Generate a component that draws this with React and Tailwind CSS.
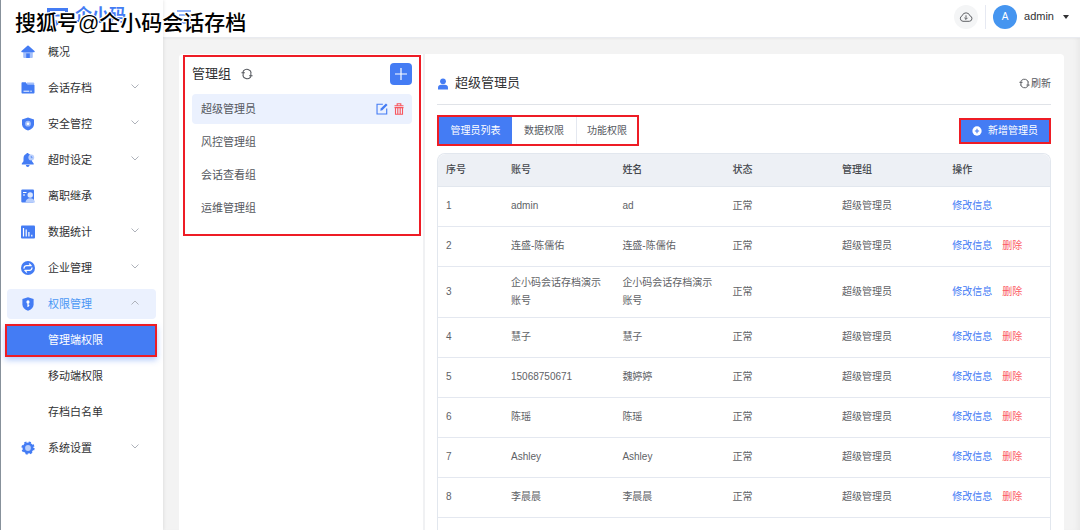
import React from "react";

const admins = [
  { account: "admin", name: "ad", removable: false },
  { account: "连盛-陈儒佑", name: "连盛-陈儒佑", removable: true },
  { account: "企小码会话存档演示账号", name: "企小码会话存档演示账号", removable: true },
  { account: "慧子", name: "慧子", removable: true },
  { account: "15068750671", name: "魏婷婷", removable: true },
  { account: "陈瑶", name: "陈瑶", removable: true },
  { account: "Ashley", name: "Ashley", removable: true },
  { account: "李晨晨", name: "李晨晨", removable: true },
];

function Icon({ className = "size-3.5", children }) {
  return (
    <svg viewBox="0 0 14 14" fill="none" aria-hidden="true" className={`shrink-0 ${className}`}>
      {children}
    </svg>
  );
}

const HomeIcon = () => (
  <Icon>
    <path d="M2.200 6.500h9.600V12a1 1 0 0 1-1 1H3.200a1 1 0 0 1-1-1z" fill="#a3bffb" />
    <path d="M6.400.8a1 1 0 0 1 1.200 0l5.900 5.300c.5.5.2 1.100-.4 1.100H.9c-.6 0-.9-.6-.4-1.100z" fill="#447cf4" />
    <path d="M5.200 8.400h3.600V13H5.200z" fill="#447cf4" />
  </Icon>
);
const FolderIcon = () => (
  <Icon>
    <path d="M6 1.500h6.400a.8.8 0 0 1 .8.8V5H6z" fill="#a3bffb" />
    <path d="M.5 2.300c0-.6.400-1 1-1h3.300l1.700 2.500H12.500c.6 0 1 .4 1 1v6.800c0 .6-.4 1-1 1h-11c-.6 0-1-.4-1-1z" fill="#447cf4" />
    <path d="M2.500 10.200h5.800M9.300 10.200h1.500" stroke="#fff" strokeWidth="1" />
  </Icon>
);
const ShieldIcon = () => (
  <Icon>
    <path d="M7 .6 13 2.500v4.700c0 3-2.400 5.200-6 6.300C3.400 12.400 1 10.200 1 7.200V2.500z" fill="#447cf4" />
    <circle cx="7" cy="6.700" r="2.900" fill="#a3bffb" />
    <circle cx="7" cy="6.700" r="1.300" fill="#fff" />
  </Icon>
);
const BellIcon = () => (
  <Icon>
    <path d="M6.500 0c.7 0 1.200.5 1.200 1.100 2 .5 3.300 2.200 3.300 4.400v2.700l1.700 2.200v1H.8v-1l1.700-2.200V5.500c0-2.200 1-3.900 2.800-4.400C5.300.500 5.800 0 6.500 0z" fill="#447cf4" />
    <path d="M4.800 12h3.800c-.2 1.200-.9 1.900-1.900 1.900s-1.700-.7-1.900-1.900z" fill="#447cf4" />
    <circle cx="10.300" cy="4.500" r="2.900" fill="#b9cffc" />
    <path d="M10.300 3v1.700h1.200" stroke="#447cf4" strokeWidth=".7" />
  </Icon>
);
const HandoverIcon = () => (
  <Icon>
    <rect x=".3" y=".5" width="12.700" height="13" rx="1" fill="#447cf4" />
    <path d="M2 3.500h3.500M2 6h2" stroke="#fff" strokeWidth="1" />
    <circle cx="9.200" cy="6" r="2.700" fill="#dce7fe" />
    <path d="M4.500 13.500c0-2.500 2-4.200 4.700-4.200s4.800 1.700 4.800 4.200z" fill="#b9cffc" />
  </Icon>
);
const StatsIcon = () => (
  <Icon>
    <rect x="0" y=".5" width="14" height="13" rx="1" fill="#447cf4" />
    <path d="M2.500 3v8.500M5.200 4.500v7M7.900 7v4.500M10.800 9.800v1.700" stroke="#fff" strokeWidth="1.200" />
  </Icon>
);
const CompanyIcon = () => (
  <Icon>
    <circle cx="7" cy="7" r="7" fill="#447cf4" />
    <path
      d="M3 7.200C3 5.500 4.300 4.700 5.600 4.700h4.600L8.400 2.900M11 6.800c0 1.700-1.300 2.500-2.600 2.500H3.800l1.800 1.800"
      stroke="#fff"
      strokeWidth="1.200"
      strokeLinecap="round"
      strokeLinejoin="round"
    />
  </Icon>
);
const KeyShieldIcon = () => (
  <Icon>
    <path d="M7 .3 12.600 2v5.500c0 2.900-2.200 5-5.600 6.200-3.400-1.200-5.600-3.300-5.600-6.200V2z" fill="#447cf4" />
    <circle cx="7" cy="4.900" r="1.600" fill="#fff" />
    <path d="M7 5v5M7 8.300h1.300" stroke="#fff" strokeWidth="1.200" />
  </Icon>
);
const GearIcon = () => (
  <Icon>
    <circle cx="7" cy="7" r="5.500" fill="#447cf4" />
    <circle cx="7" cy="7" r="5.700" stroke="#447cf4" strokeWidth="1.800" strokeDasharray="2.240 2.240" />
    <circle cx="7" cy="7" r="2.900" fill="#b9cffc" />
  </Icon>
);

function Chevron({ up }) {
  return (
    <svg viewBox="0 0 8 5" fill="none" aria-hidden="true" className="mb-1 ml-auto h-[5px] w-2 shrink-0">
      <path d={up ? "M.5 4.500 4 1l3.500 3.500" : "M.5.5 4 4 7.500.5"} stroke="#aeb2ba" strokeWidth="1" />
    </svg>
  );
}

function RefreshIcon({ className }) {
  return (
    <Icon className={className}>
      <path
        d="M2.500 9.500V4.500a2 2 0 0 1 .6-1.400A5.300 5.300 0 0 1 12 5.500M11.500 4.500v5a2 2 0 0 1-.6 1.400A5.300 5.300 0 0 1 2 8.500M.500 5.500h4M9.500 9h4"
        stroke="#55585e"
        strokeWidth="1.200"
      />
    </Icon>
  );
}

const menu = [
  { label: "概况", icon: HomeIcon },
  { label: "会话存档", icon: FolderIcon, expandable: true },
  { label: "安全管控", icon: ShieldIcon, expandable: true },
  { label: "超时设定", icon: BellIcon, expandable: true },
  { label: "离职继承", icon: HandoverIcon },
  { label: "数据统计", icon: StatsIcon, expandable: true },
  { label: "企业管理", icon: CompanyIcon, expandable: true },
  {
    label: "权限管理",
    icon: KeyShieldIcon,
    expandable: true,
    open: true,
    children: ["管理端权限", "移动端权限", "存档白名单"],
  },
  { label: "系统设置", icon: GearIcon, expandable: true },
];

function Sidebar() {
  return (
    <aside className="relative z-10 w-[163px] shrink-0 border-l border-[#87919b] bg-white pl-1.5 pr-[7px] shadow-[1px_0_3px_rgba(0,0,0,0.08)]">
      <div className="flex h-[34px] items-start gap-[7px] pl-10 pt-1.5 text-[17px] font-bold leading-5 text-[#447cf4]">
        <svg viewBox="0 0 21 18" fill="none" aria-hidden="true" className="mt-0.5 h-[18px] w-[21px]">
          <path d="M1.500 1.500h18v12H12L8 17v-3.500H1.500z" stroke="#447cf4" strokeWidth="3" />
          <path d="M6 7.500h9" stroke="#447cf4" strokeWidth="2" />
        </svg>
        <span>企小码</span>
      </div>
      <nav>
        <ul>
          {menu.map(({ label, icon: ItemIcon, expandable, open, children }) => (
            <li key={label}>
              <div className="flex h-9 items-center">
                <button
                  type="button"
                  aria-expanded={expandable ? Boolean(open) : undefined}
                  className={`flex h-[30px] w-full items-center gap-[13px] rounded-sm pl-3.5 pr-[17px] text-[11px] ${
                    open ? "bg-[#ebf1fe] text-[#4a97f5]" : "text-[#303133]"
                  }`}
                >
                  <ItemIcon />
                  <span>{label}</span>
                  {expandable && <Chevron up={open} />}
                </button>
              </div>
              {children && (
                <ul>
                  {children.map((child, index) => (
                    <li key={child} className="-ml-0.5 -mr-px flex h-9 items-center">
                      <a
                        href="#"
                        className={`flex h-[33px] w-full items-center border-2 pl-[41px] text-[11px] ${
                          index === 0
                            ? "border-[#ee1c25] bg-[#447cf4] text-white shadow-[0_3px_6px_rgba(68,124,244,0.4)]"
                            : "border-transparent text-[#303133]"
                        }`}
                      >
                        {child}
                      </a>
                    </li>
                  ))}
                </ul>
              )}
            </li>
          ))}
        </ul>
      </nav>
    </aside>
  );
}

function Header() {
  return (
    <header className="flex h-[38px] shrink-0 items-center border-b border-[#e9ebf0] bg-white pb-1 pl-3.5 pr-2.5 shadow-[0_1px_2px_rgba(0,0,0,0.04)]">
      <button type="button" aria-label="收起菜单">
        <Icon>
          <path d="M0 1h14M2 5h8M4 9h6M0 13h14" stroke="#6f9af7" strokeWidth="1.400" />
          <path d="M14 4.500v5L11 7z" fill="#6f9af7" />
        </Icon>
      </button>
      <button
        type="button"
        aria-label="下载"
        className="ml-auto flex size-6 items-center justify-center rounded-full bg-[#f4f5f6]"
      >
        <Icon>
          <path
            d="M4 11.300h6.300a2.800 2.800 0 0 0 .6-5.500A4 4 0 0 0 3.200 5.700 2.900 2.900 0 0 0 4 11.300z"
            stroke="#606266"
            strokeWidth="1"
          />
          <path d="M7 5.300v4M5.400 7.800 7 9.400l1.600-1.600" stroke="#606266" strokeWidth="1" />
        </Icon>
      </button>
      <span className="mx-[7px] h-6 w-px bg-[#e6e9f2]" />
      <button type="button" className="flex items-center text-[11px] text-[#303133]">
        <span className="flex size-6 items-center justify-center rounded-full bg-[#4595f0] text-[10px] text-white">A</span>
        <span className="ml-[7px]">admin</span>
        <svg viewBox="0 0 8 4" aria-hidden="true" className="ml-2 h-1 w-2">
          <path d="M1 0h6L4 4z" fill="#303133" />
        </svg>
      </button>
    </header>
  );
}

const groups = ["超级管理员", "风控管理组", "会话查看组", "运维管理组"];

function GroupPanel() {
  return (
    <section className="w-[246px] shrink-0 border-r-2 border-[#f0f1f3] pl-1 pr-0.5 pt-px">
      <div className="border-2 border-[#ee1c25] px-[7px] pb-[11px] pt-1.5">
        <div className="flex h-[22px] items-center">
          <h2 className="text-[13px] text-[#303133]">管理组</h2>
          <button type="button" aria-label="刷新管理组" className="ml-2.5">
            <RefreshIcon className="size-3" />
          </button>
          <button
            type="button"
            aria-label="新增管理组"
            className="ml-auto flex size-[22px] items-center justify-center rounded-sm bg-[#447cf4]"
          >
            <Icon className="size-3">
              <path d="M7 0v14M0 7h14" stroke="#fff" strokeWidth="1.400" />
            </Icon>
          </button>
        </div>
        <ul className="mt-[9px] flex flex-col gap-[3px]">
          {groups.map((group, index) => (
            <li
              key={group}
              className={`flex h-[30px] items-center rounded-sm pl-[9px] pr-2 ${index === 0 ? "bg-[#ebf1fe]" : ""}`}
            >
              <button type="button" className="text-[11px] text-[#55585e]">
                {group}
              </button>
              {index === 0 && (
                <span className="ml-auto flex items-center gap-1.5">
                  <button type="button" aria-label="编辑">
                    <Icon className="size-3">
                      <path d="M8 1.500H1.200v11.300h11.300V6.500" stroke="#447cf4" strokeWidth="1.300" />
                      <path d="m5 9 .5-2.500L11.600.5l1.900 1.900L7.400 8.500z" fill="#447cf4" />
                    </Icon>
                  </button>
                  <button type="button" aria-label="删除分组">
                    <svg viewBox="0 0 10 12" fill="none" aria-hidden="true" className="h-3 w-2.5">
                      <path
                        d="M.5 2.800h9M3.200 2.500V.8h3.600v1.700M.5 4.600h9M1.500 4.600v6.700h7V4.600M3.800 5v6M6.200 5v6"
                        stroke="#f8565e"
                        strokeWidth="1.100"
                      />
                    </svg>
                  </button>
                </span>
              )}
            </li>
          ))}
        </ul>
      </div>
    </section>
  );
}

function AdminTable() {
  return (
    <div className="flex-1 rounded-t-lg border-x border-t border-[#e2e7ee]">
      <table className="w-full table-fixed text-left text-[10px] leading-[18px] text-[#606266]">
        <colgroup>
          <col className="w-[65px]" />
          <col className="w-[18.2%]" />
          <col className="w-[18%]" />
          <col className="w-[17.9%]" />
          <col className="w-[18%]" />
          <col />
        </colgroup>
        <thead>
          <tr className="h-8">
            {["序号", "账号", "姓名", "状态", "管理组", "操作"].map((title) => (
              <th
                key={title}
                scope="col"
                className="border-b border-[#e2e7ee] bg-[#edf0f5] px-2 font-medium text-[#45484d] first:rounded-tl-lg last:rounded-tr-lg"
              >
                {title}
              </th>
            ))}
          </tr>
        </thead>
        <tbody>
          {admins.map((admin, index) => (
            <tr key={admin.account} className="h-10 border-b border-[#e4e8f0]">
              <td className="px-2 py-[7px]">{index + 1}</td>
              <td className="px-2 py-[7px]">{admin.account}</td>
              <td className="px-2 py-[7px]">{admin.name}</td>
              <td className="px-2 py-[7px]">正常</td>
              <td className="px-2 py-[7px]">超级管理员</td>
              <td className="px-2 py-[7px]">
                <div className="flex gap-2.5">
                  <a href="#" className="text-[#3f7af5]">
                    修改信息
                  </a>
                  {admin.removable && (
                    <a href="#" className="text-[#fb5a62]">
                      删除
                    </a>
                  )}
                </div>
              </td>
            </tr>
          ))}
        </tbody>
      </table>
    </div>
  );
}

function AdminPanel() {
  return (
    <section className="flex min-w-0 flex-1 flex-col pl-3 pr-[13px]">
      <div className="flex h-[51px] items-center border-b border-[#e0e3e8] pt-2">
        <svg viewBox="0 0 12 12" aria-hidden="true" className="mt-0.5 size-3">
          <circle cx="6" cy="3.300" r="2.900" fill="#447cf4" />
          <path d="M1 11.500V9.500c0-1.700 1.500-2.700 3-2.700h4c1.500 0 3 1 3 2.700v2z" fill="#447cf4" />
        </svg>
        <h1 className="ml-1.5 text-[13px] text-[#303133]">超级管理员</h1>
        <button type="button" className="ml-auto flex items-center gap-px text-[10px] text-[#55585e]">
          <RefreshIcon className="size-[11px]" />
          <span>刷新</span>
        </button>
      </div>
      <div className="mb-[7px] mt-2.5 flex items-center">
        <div
          role="tablist"
          className="grid h-[31px] grid-cols-[73px_64px_61px] border-2 border-[#ee1c25] text-[10px] text-[#55585e]"
        >
          <button type="button" role="tab" aria-selected="true" className="bg-[#447cf4] text-white">
            管理员列表
          </button>
          <button type="button" role="tab" aria-selected="false">
            数据权限
          </button>
          <button type="button" role="tab" aria-selected="false" className="border-l border-[#e4e8f0]">
            功能权限
          </button>
        </div>
        <button
          type="button"
          className="ml-auto flex h-[26px] items-center gap-1.5 border-2 border-[#ee1c25] bg-[#447cf4] px-[11px] text-[10px] text-white"
        >
          <Icon className="size-[10px]">
            <circle cx="7" cy="7" r="6.500" fill="#fff" />
            <path d="M7 4v6M4 7h6" stroke="#447cf4" strokeWidth="1.500" />
          </Icon>
          <span>新增管理员</span>
        </button>
      </div>
      <AdminTable />
    </section>
  );
}

export default function App() {
  return (
    <div className="relative flex h-screen overflow-hidden bg-[#f3f3f3] font-['Liberation_Sans','Noto_Sans_CJK_SC',sans-serif]">
      <Sidebar />
      <div className="flex min-w-0 flex-1 flex-col">
        <Header />
        <main className="flex min-h-0 flex-1 px-4 pt-4 shadow-[inset_-6px_0_6px_-4px_rgba(0,0,0,0.05)]">
          <div className="flex min-w-0 flex-1 rounded-t-sm bg-white">
            <GroupPanel />
            <AdminPanel />
          </div>
        </main>
      </div>
      <p className="pointer-events-none absolute left-[15px] top-2 z-20 whitespace-nowrap text-[21px] font-medium leading-[30px] text-black [text-shadow:1px_0_0_#fff,-1px_0_0_#fff,0_1px_0_#fff,0_-1px_0_#fff,1px_1px_0_#fff,-1px_-1px_0_#fff]">
        搜狐号@企小码会话存档
      </p>
    </div>
  );
}
